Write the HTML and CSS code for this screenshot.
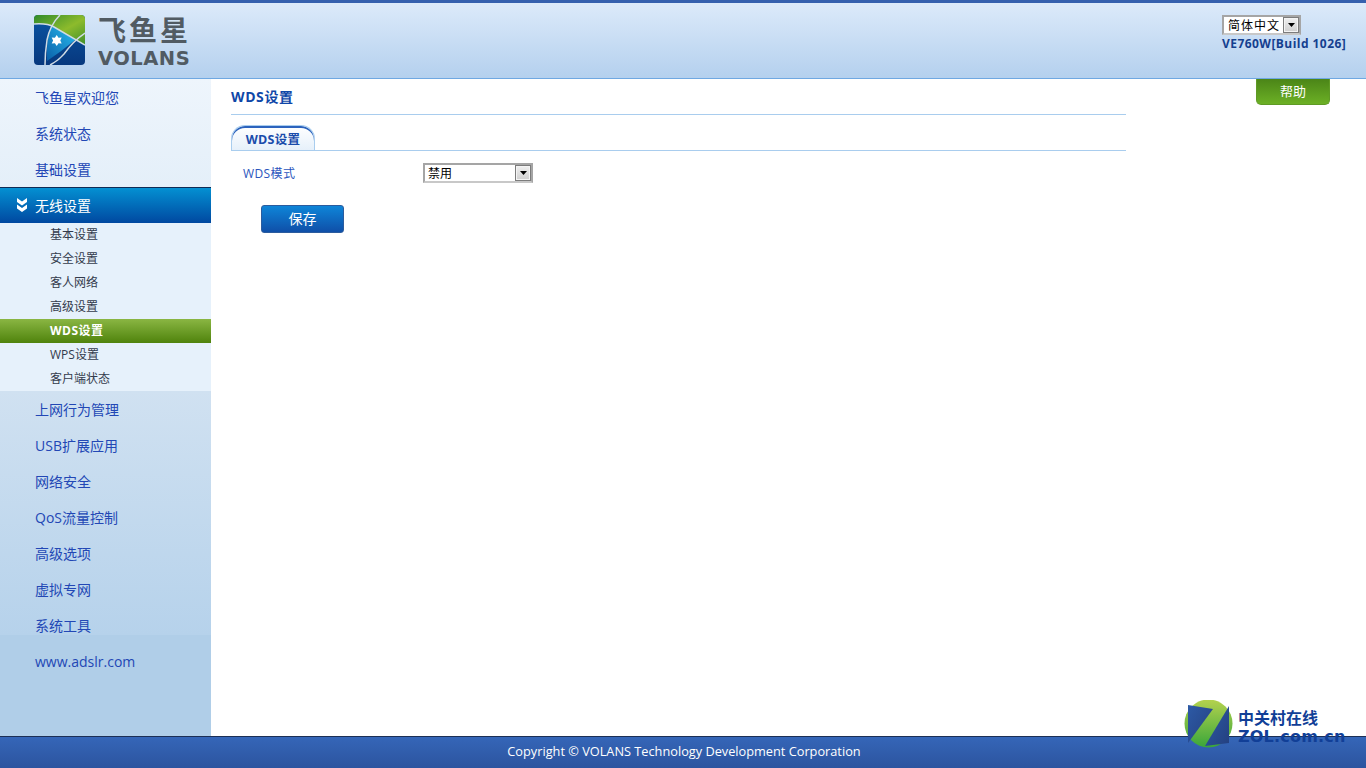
FILE: index.html
```html
<!DOCTYPE html>
<html lang="zh-CN">
<head>
<meta charset="utf-8">
<title>VOLANS</title>
<link rel="stylesheet" href="styles.css">
</head>
<body>
<header class="top">
  <div class="brand">
    <svg class="mark" width="51" height="50" viewBox="0 0 51 50">
      <defs>
        <linearGradient id="g" x1="0" y1="0" x2="1" y2="1"><stop offset="0" stop-color="#2f8a2a"/><stop offset=".55" stop-color="#8dbb2c"/><stop offset="1" stop-color="#3f8f2a"/></linearGradient>
        <linearGradient id="b" x1="0" y1="0" x2="0" y2="1"><stop offset="0" stop-color="#0a55a4"/><stop offset="1" stop-color="#07387e"/></linearGradient>
        <linearGradient id="c" x1="0" y1="1" x2="1" y2="0"><stop offset="0" stop-color="#0b5fa8"/><stop offset="1" stop-color="#27bdf0"/></linearGradient>
        <clipPath id="r"><rect width="51" height="50" rx="4"/></clipPath>
      </defs>
      <g clip-path="url(#r)">
        <rect width="51" height="50" fill="url(#b)"/>
        <path d="M0 0H51V30L20 12Q13 8 0 9Z" fill="url(#g)"/>
        <path d="M17 11Q30 17 41 25Q28 36 13 46Q12 25 17 11Z" fill="url(#c)"/>
        <path d="M0 9Q13 8 20 12L51 30" fill="none" stroke="#cfdbe4" stroke-width="1.500"/>
        <path d="M26 0Q16 10 13 25Q11 38 11 50" fill="none" stroke="#cfdbe4" stroke-width="1.500"/>
        <path d="M51 18Q39 26 30 39Q24 46 16 50" fill="none" stroke="#cfdbe4" stroke-width="1.500"/>
        <path d="M22.700 20l1.800 2.700 3.200-.2-1.400 3 1.400 3-3.200-.2-1.800 2.700-1.800-2.700-3.200.2 1.400-3-1.400-3 3.200.2Z" fill="#fff"/>
      </g>
    </svg>
    <div class="wordmark">
      <span class="cn">飞鱼星</span>
      <span class="en">VOLANS</span>
    </div>
  </div>
  <div class="tools">
    <span class="pick lang"><select class="sel"><option>简体中文</option></select><span class="arrow"><svg width="7" height="4" viewBox="0 0 7 4"><path d="M0 0H7L3.500 4Z"/></svg></span></span>
    <div class="build">VE760W[Build 1026]</div>
  </div>
</header>
<div class="body">
  <nav class="side">
    <div class="group light">
      <a class="item">飞鱼星欢迎您</a>
      <a class="item">系统状态</a>
      <a class="item">基础设置</a>
    </div>
    <a class="item active"><svg class="chev" width="12" height="14" viewBox="0 0 12 14"><path d="M1 0L6 3.500 11 0V4L6 7.500 1 4ZM1 6.500L6 10 11 6.500V10.500L6 14 1 10.500Z" fill="#fff"/></svg>无线设置</a>
    <div class="subs">
      <a class="sub">基本设置</a>
      <a class="sub">安全设置</a>
      <a class="sub">客人网络</a>
      <a class="sub">高级设置</a>
      <a class="sub on">WDS设置</a>
      <a class="sub">WPS设置</a>
      <a class="sub">客户端状态</a>
    </div>
    <div class="group dark">
      <a class="item">上网行为管理</a>
      <a class="item">USB扩展应用</a>
      <a class="item">网络安全</a>
      <a class="item">QoS流量控制</a>
      <a class="item">高级选项</a>
      <a class="item">虚拟专网</a>
      <a class="item">系统工具</a>
    </div>
    <a class="item">www.adslr.com</a>
  </nav>
  <main class="main">
    <h1 class="title">WDS设置</h1>
    <div class="tabs"><span class="tab">WDS设置</span></div>
    <div class="row">
      <label class="lbl">WDS模式</label>
      <span class="pick mode"><select class="sel"><option>禁用</option></select><span class="arrow"><svg width="7" height="4" viewBox="0 0 7 4"><path d="M0 0H7L3.500 4Z"/></svg></span></span>
    </div>
    <button class="save" type="button">保存</button>
  </main>
  <a class="help">帮助</a>
</div>
<footer class="foot">Copyright © VOLANS Technology Development Corporation</footer>
<div class="zol">
  <svg width="50" height="48" viewBox="0 0 50 48">
    <defs>
      <linearGradient id="zg" x1="0" y1="0" x2="0" y2="1"><stop offset="0" stop-color="#b4d24e"/><stop offset="1" stop-color="#3aa63a"/></linearGradient>
      <linearGradient id="zb" x1="0" y1="0" x2="1" y2="1"><stop offset="0" stop-color="#2d5aa6"/><stop offset="1" stop-color="#24407f"/></linearGradient>
    </defs>
    <circle cx="24.500" cy="23.500" r="24" fill="url(#zg)"/>
    <path d="M4 5L29 9L4 43Z" fill="url(#zb)"/>
    <path d="M45 6V43L21 46Z" fill="url(#zb)"/>
  </svg>
  <div class="zt"><span class="zc">中关村在线</span><span class="ze">ZOL.com.cn</span></div>
</div>
</body>
</html>
```
FILE: styles.css
```css
* { box-sizing: border-box; }
html, body { margin: 0; height: 100%; }
body {
  width: 1366px; height: 768px; overflow: hidden; position: relative;
  display: flex; flex-direction: column; background: #fff;
  font-family: "Open Sans", "Noto Sans CJK SC", sans-serif; font-size: 12px; color: #1d4fb0;
}
.top {
  height: 79px; flex: none; border-top: 3px solid #3560ae; border-bottom: 1px solid #6fa8e2;
  background: linear-gradient(#dceafa, #b4d0ee);
  display: flex; justify-content: space-between; padding: 12px 20px 0 34px;
}
.brand { display: flex; gap: 13px; height: 50px; }
.wordmark { display: flex; flex-direction: column; color: #515b63; width: 92px; }
.cn { font: 700 28px/28px "Noto Sans CJK SC", sans-serif; letter-spacing: 3px; white-space: nowrap; }
.en { font: 700 19.500px/20px "DejaVu Sans", sans-serif; margin-top: 6px; letter-spacing: .5px; }
.tools { display: flex; flex-direction: column; align-items: flex-start; width: 124px; }
.pick { position: relative; display: block; height: 20px; border: 2px solid; border-color: #a5a5a5 #a5a5a5 #c8c8c8 #a5a5a5; background: #fff; }
.lang { width: 79px; }
.mode { width: 110px; }
.sel {
  appearance: none; border: 0; background: transparent; width: 100%; height: 16px; padding: 0 0 0 3px; margin: 0;
  font: 12px/16px "Noto Sans CJK SC", sans-serif; color: #000; display: block; outline: 0;
}
.lang .sel { letter-spacing: 1px; padding-left: 4px; }
.arrow {
  position: absolute; right: 0; top: 0; width: 16px; height: 16px;
  border: 1px solid #7c7c7c; box-shadow: inset 0 0 0 1px #f4f4f4; background: linear-gradient(#f0f0f0, #cfcfcf);
  display: flex; align-items: center; justify-content: center;
}
.build { font: 700 12px/16px "Open Sans", sans-serif; color: #14408f; white-space: nowrap; margin-top: 1px; letter-spacing: .45px; }
.body { flex: 1; display: flex; min-height: 0; }
.side { width: 211px; flex: none; background: #b0cee8; display: flex; flex-direction: column; }
.group.light { background: linear-gradient(#eef5fc, #e4eff9); }
.group.dark { background: linear-gradient(#d0e1f1, #b6d2eb 244px, #b0cee8 244px); }
.item {
  display: flex; align-items: center; height: 36px; padding-left: 35px; font-size: 14px; color: #2247b5; position: relative;
}
.active {
  color: #fff; border-top: 1px solid #0e2a55; padding-bottom: 2px;
  background: linear-gradient(#0490d2, #0048a0);
}
.chev { position: absolute; left: 16px; top: 10px; }
.subs { background: #e6f1fb; }
.sub { display: flex; align-items: center; height: 24px; padding: 0 0 2px 50px; font-size: 12px; color: #333b4c; }
.sub.on { color: #fff; font-weight: 700; letter-spacing: .5px; background: linear-gradient(#8ab643, #4f830c); }
.main { width: 895px; margin-left: 20px; flex: none; }
.title {
  margin: 0; height: 36px; border-bottom: 1px solid #a9cdee; letter-spacing: .6px;
  font: 700 14px/36px "Open Sans", "Noto Sans CJK SC", sans-serif; color: #0f47a8;
}
.tabs { margin-top: 10px; height: 26px; border-bottom: 1px solid #a9cdee; }
.tab {
  display: block; width: 84px; height: 25px; border: 1px solid #a9cdee; border-bottom: 0; border-radius: 14px 14px 0 0;
  background: linear-gradient(#fff, #e6f0fa); box-shadow: inset 0 2px 0 #2c63bd;
  text-align: center; font-weight: 700; font-size: 12.500px; line-height: 28px; color: #1a4cab; letter-spacing: .3px;
}
.row { display: flex; align-items: center; height: 20px; margin-top: 12px; }
.lbl { width: 192px; padding-left: 12px; color: #2a55bd; letter-spacing: .4px; }
.save {
  display: block; margin: 22px 0 0 30px; width: 83px; height: 28px; padding: 0 0 2px;
  border: 1px solid #2b5c9e; border-radius: 3px; background: linear-gradient(#0e85d8, #0f4fa8);
  color: #fff; font: 14px/24px "Noto Sans CJK SC", sans-serif;
}
.help {
  margin-left: 130px; width: 74px; height: 26px; flex: none; color: #fff; font-size: 13px; text-align: center; line-height: 25px;
  background: linear-gradient(#4b8518, #6cb025); border: 1px solid #5f9a25; border-top: 0; border-radius: 0 0 5px 5px;
}
.foot {
  height: 32px; flex: none; border-top: 1px solid #1c2f55; text-align: center; line-height: 29px; font-size: 12.750px; color: #fff;
  background: linear-gradient(#3566b8, #2c549f); padding-left: 2px;
}
.zol { position: absolute; left: 1184px; top: 700px; display: flex; gap: 4px; }
.zt { display: flex; flex-direction: column; margin-top: 8px; color: #113f97; }
.zc { font: 700 16px/18px "Noto Sans CJK SC", sans-serif; white-space: nowrap; }
.ze { font: 700 16px/17px "DejaVu Sans", sans-serif; white-space: nowrap; letter-spacing: .2px; margin-top: 2px; }
```
